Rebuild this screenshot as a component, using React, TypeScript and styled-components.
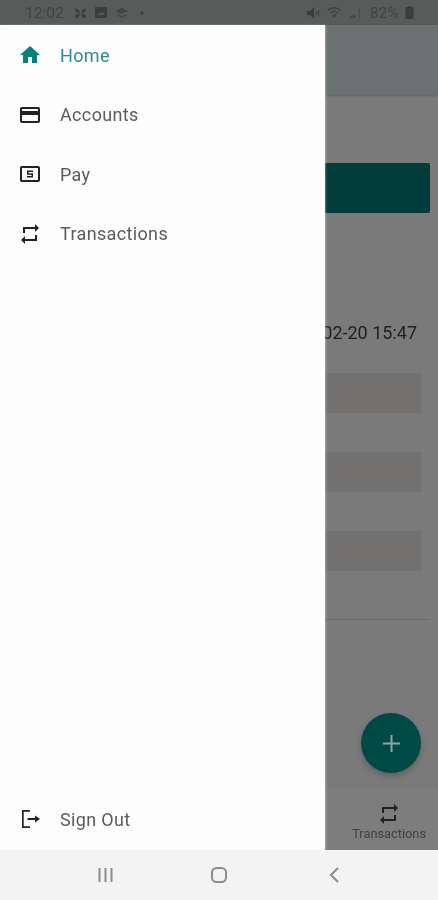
import React from "react";
import styled, { createGlobalStyle } from "styled-components";

const GlobalStyle = createGlobalStyle`
  html, body {
    margin: 0;
    padding: 0;
    background: #f3f3f3;
  }
  body {
    font-family: Roboto, "Liberation Sans", sans-serif;
  }
`;

const Screen = styled.div`
  width: 438px;
  height: 900px;
  display: flex;
  flex-direction: column;
  overflow: hidden;
`;

const StatusBar = styled.div`
  height: 25px;
  flex: none;
  background: #575b5a;
  color: #3f4342;
  display: flex;
  align-items: center;
  justify-content: space-between;
  padding: 0 24px 0 25px;
  font-size: 15.5px;
  filter: blur(0.5px);
`;

const StatusGroup = styled.div`
  display: flex;
  align-items: center;
  gap: 6px;
`;

const StatusTime = styled.span`
  margin-right: 3px;
`;

const StatusIcon = styled.svg`
  display: block;
  fill: #3a3e3d;
`;

const Percent = styled.span`
  margin-left: 3px;
  font-size: 15px;
  letter-spacing: 0.4px;
`;

const Body = styled.div`
  flex: 1;
  position: relative;
  background: #7a7a7a;
  display: flex;
  flex-direction: column;
`;

const AppBar = styled.div`
  height: 70px;
  flex: none;
  background: #6b7170;
  box-shadow: 0 1px 2px rgba(0, 0, 0, 0.2);
`;

const PageContent = styled.div`
  flex: 1;
  display: flex;
  flex-direction: column;
  align-items: flex-end;
  padding: 68px 8px 0 0;
`;

const PrimaryBlock = styled.div`
  width: 300px;
  height: 50px;
  background: #003c3a;
  border-radius: 2px;
`;

const DateText = styled.div`
  margin: 109px 13px 0 0;
  height: 21px;
  line-height: 21px;
  font-size: 18px;
  color: #1f1f1f;
  filter: blur(0.5px);
`;

const RowList = styled.div`
  margin: 30px 9px 0 0;
  display: flex;
  flex-direction: column;
  gap: 39px;
`;

const GreyRow = styled.div`
  width: 300px;
  height: 40px;
  background: #72716f;
`;

const Divider = styled.div`
  width: 300px;
  height: 1px;
  margin: 48px 2px 0 0;
  background: #686868;
`;

const Fab = styled.div`
  position: absolute;
  left: 361px;
  top: 688px;
  width: 60px;
  height: 60px;
  border-radius: 50%;
  background: #004a46;
  box-shadow: 0 3px 6px rgba(0, 0, 0, 0.22);
  display: flex;
  align-items: center;
  justify-content: center;
`;

const BottomTab = styled.div`
  height: 60px;
  flex: none;
  background: #7d7d7d;
  display: flex;
  flex-direction: column;
  align-items: flex-end;
  justify-content: flex-end;
  padding: 0 12px 9px 0;
  box-sizing: border-box;
`;

const TabItem = styled.div`
  display: flex;
  flex-direction: column;
  align-items: center;
  font-size: 12.8px;
  line-height: 15px;
  color: #404040;
  filter: blur(0.4px);
`;

const Drawer = styled.nav`
  position: absolute;
  left: 0;
  top: 0;
  bottom: 0;
  width: 325px;
  background: #fdfdfd;
  box-shadow: 1px 0 2px rgba(255, 255, 255, 0.35);
  display: flex;
  flex-direction: column;
  padding: 0.5px 0 1px;
  box-sizing: border-box;
`;

const DrawerItem = styled.div<{ $active?: boolean; $bottom?: boolean }>`
  height: 59.5px;
  flex: none;
  display: flex;
  align-items: center;
  gap: 18px;
  padding-left: 18px;
  font-size: 18px;
  letter-spacing: 0.35px;
  color: ${({ $active }) => ($active ? "#2a8f89" : "#5c5c5c")};
  margin-top: ${({ $bottom }) => ($bottom ? "auto" : "0")};
  filter: blur(0.45px);
`;

const Icon = styled.svg<{ $color?: string }>`
  display: block;
  flex: none;
  fill: ${({ $color }) => $color || "#222"};
`;

const NavBar = styled.div`
  height: 50px;
  flex: none;
  background: #f3f3f3;
  display: grid;
  grid-template-columns: 114px 114px 112px;
  justify-content: start;
  align-items: center;
  justify-items: end;
  filter: blur(0.5px);
`;

const NavIcon = styled.svg`
  display: block;
  fill: none;
  stroke: #8c8c8c;
  stroke-width: 2;
`;

const HOME = "M10 20v-6h4v6h5v-8h3L12 3 2 12h3v8z";
const CARD =
  "M20 4H4c-1.11 0-1.99.89-1.99 2L2 18c0 1.11.89 2 2 2h16c1.11 0 2-.89 2-2V6c0-1.11-.89-2-2-2zm0 14H4v-6h16v6zm0-10H4V6h16v2z";
const BILL =
  "M9 8.500h6V10h-4.500v1.250H15V15.500H9V14h4.500v-1.250H9zM20 4H4c-1.11 0-1.99.89-1.99 2L2 18c0 1.11.89 2 2 2h16c1.11 0 2-.89 2-2V6c0-1.11-.89-2-2-2zm0 14H4V6h16v12z";
const REPEAT = "M7 7h10v3l4-4-4-4v3H5v6h2V7zm10 10H7v-3l-4 4 4 4v-3h12v-6h-2v4z";
const EXIT =
  "M4 3h8v1.700H5.700v14.600H12V21H4zM17 8.500 22 12l-5 3.500V13H9.500v-2H17z";

const items = [
  { label: "Home", path: HOME, active: true },
  { label: "Accounts", path: CARD },
  { label: "Pay", path: BILL },
  { label: "Transactions", path: REPEAT },
];

const MaterialIcon: React.FC<{ path: string; color?: string }> = ({ path, color }) => (
  <Icon $color={color} width={24} height={24} viewBox="0 0 24 24">
    <path d={path} />
  </Icon>
);

export default function App() {
  return (
    <>
      <GlobalStyle />
      <Screen>
        <StatusBar>
          <StatusGroup>
            <StatusTime>12:02</StatusTime>
            <StatusIcon width="15" height="14" viewBox="0 0 15 14">
              <path d="M7 7C4 7 2 6 2 4s3-3 5 3zm1 0c3 0 5-1 5-3s-3-3-5 3zM7 8c-3 0-5 .5-5 2.500s3 3 5-2.500zm1 0c3 0 5 .5 5 2.500s-3 3-5-2.500z" />
            </StatusIcon>
            <StatusIcon width="14" height="13" viewBox="0 0 14 13">
              <path d="M1 1h12v11H1zm2 8h8L8.500 5.500 6.500 8 5 6.500z" fillRule="evenodd" />
            </StatusIcon>
            <StatusIcon width="15" height="12" viewBox="0 0 15 12">
              <path d="M1 4 8 1l6 3-6 3zm2 3 5 2 4-2v1.500L8 11 3 8.500z" opacity="0.75" />
            </StatusIcon>
            <StatusIcon width="12" height="6" viewBox="0 0 12 6">
              <circle cx="7" cy="3" r="1.600" />
            </StatusIcon>
          </StatusGroup>
          <StatusGroup>
            <StatusIcon width="14" height="14" viewBox="0 0 14 14">
              <path d="M1 5h3l4-4v12L4 9H1zm9 0h1v4h-1zm2-1h1v6h-1z" />
            </StatusIcon>
            <StatusIcon width="17" height="13" viewBox="0 0 17 13">
              <path d="M1 4c4-4 10-4 14 0l-1 1C10 2 6 2 2 5zm2.500 2.500c3-2.500 6-2.500 9 0l-1 1c-2.500-2-4.500-2-7 0zM6 9c1.500-1 3-1 4.500 0L8 12z" opacity="0.8" />
            </StatusIcon>
            <StatusIcon width="12" height="12" viewBox="0 0 12 12">
              <path d="M1 9h1.500v2H1zm3-1h1.500v3H4z" />
              <path d="M10 1h1v10h-1z" opacity="0.5" />
            </StatusIcon>
            <Percent>82%</Percent>
            <StatusIcon width="9" height="13" viewBox="0 0 9 13">
              <path d="M3 0h3v1h2.500v12H.5V1H3z" />
            </StatusIcon>
          </StatusGroup>
        </StatusBar>

        <Body>
          <AppBar />
          <PageContent>
            <PrimaryBlock />
            <DateText>2020-02-20 15:47</DateText>
            <RowList>
              <GreyRow />
              <GreyRow />
              <GreyRow />
            </RowList>
            <Divider />
          </PageContent>
          <BottomTab>
            <TabItem>
              <MaterialIcon path={REPEAT} />
              Transactions
            </TabItem>
          </BottomTab>
          <Fab>
            <svg width="17" height="17" viewBox="0 0 17 17">
              <path d="M7.500 0h2v17h-2zM0 7.500h17v2H0z" fill="#8fa6a3" />
            </svg>
          </Fab>

          <Drawer>
            {items.map((item) => (
              <DrawerItem key={item.label} $active={item.active}>
                <MaterialIcon path={item.path} color={item.active ? "#06807a" : undefined} />
                {item.label}
              </DrawerItem>
            ))}
            <DrawerItem $bottom>
              <MaterialIcon path={EXIT} />
              Sign Out
            </DrawerItem>
          </Drawer>
        </Body>

        <NavBar>
          <NavIcon width="17" height="16" viewBox="0 0 17 16">
            <path d="M2.500 1v14M8.500 1v14M14.500 1v14" />
          </NavIcon>
          <NavIcon width="18" height="18" viewBox="0 0 18 18">
            <rect x="2" y="2" width="14" height="14" rx="4.500" />
          </NavIcon>
          <NavIcon width="12" height="18" viewBox="0 0 12 18">
            <path d="M10 2 3 9l7 7" />
          </NavIcon>
        </NavBar>
      </Screen>
    </>
  );
}
